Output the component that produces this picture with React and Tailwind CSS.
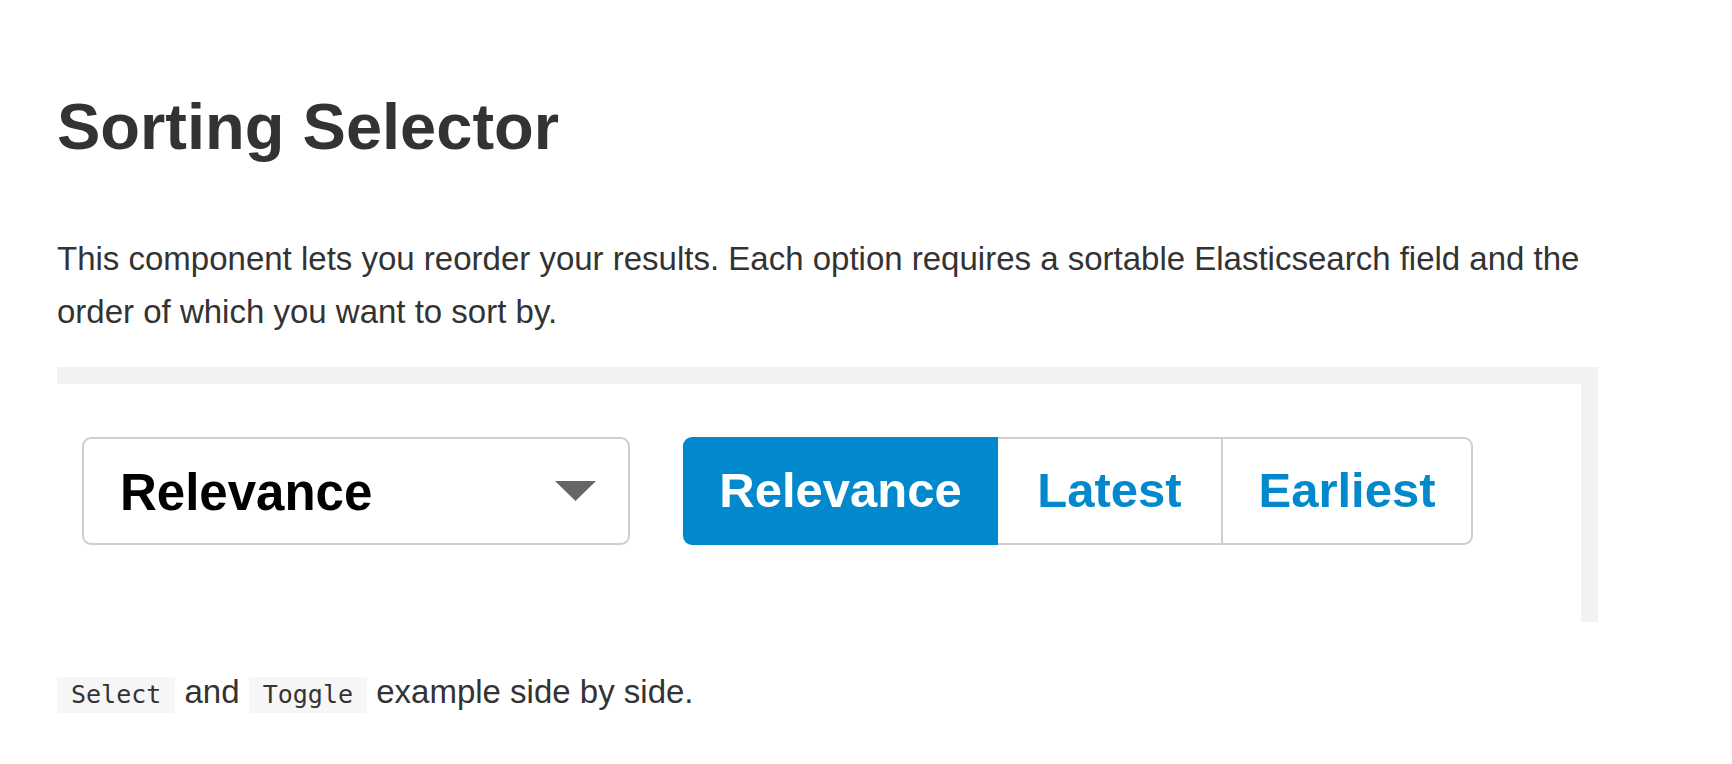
const options = ['Relevance', 'Latest', 'Earliest'];

const SortSelect = () => {
  return (
    <div className="w-[548px] h-[108px] border-2 border-[#cfcfcf] rounded-[9px] bg-white flex items-center justify-between pl-[36px] pr-[32px]">
      <span className="text-[51px] font-bold text-black pt-1">Relevance</span>
      <svg width="41" height="20" viewBox="0 0 41 20">
        <polygon points="0,0 41,0 20.5,20" fill="#666666" />
      </svg>
    </div>
  );
};

const SortToggle = () => {
  return (
    <div className="flex h-[108px] text-[49px] font-bold">
      <button className="w-[315px] bg-[#0288cc] text-white rounded-l-[9px] flex items-center justify-center">
        {options[0]}
      </button>
      <button className="w-[225px] border-y-2 border-r-2 border-[#cfcfcf] text-[#0288cc] flex items-center justify-center">
        {options[1]}
      </button>
      <button className="w-[250px] border-y-2 border-r-2 border-[#cfcfcf] rounded-r-[9px] text-[#0288cc] flex items-center justify-center">
        {options[2]}
      </button>
    </div>
  );
};

const Code = ({ children }) => (
  <code className="inline-block bg-[#f6f6f6] px-[14px] leading-[36px] text-[25px] text-[#333] font-['DejaVu_Sans_Mono',monospace]">
    {children}
  </code>
);

export default function App() {
  return (
    <div className="min-h-screen bg-white pl-[57px] pt-[88px] font-['Liberation_Sans',Arial,sans-serif] text-[#333]">
      <h1 className="text-[65px] font-bold leading-[78px]">Sorting Selector</h1>

      <p className="mt-[66px] w-[1560px] text-[33px] leading-[53px]">
        This component lets you reorder your results. Each option requires a
        sortable Elasticsearch field and the order of which you want to sort by.
      </p>

      <div className="mt-[29px] w-[1541px] h-[255px] border-t-[17px] border-r-[17px] border-[#f2f2f2]">
        <div className="flex gap-[53px] pt-[53px] pl-[25px]">
          <SortSelect />
          <SortToggle />
        </div>
      </div>

      <p className="mt-[45px] text-[33px] leading-[50px]">
        <Code>Select</Code> and <Code>Toggle</Code> example side by side.
      </p>
    </div>
  );
}
